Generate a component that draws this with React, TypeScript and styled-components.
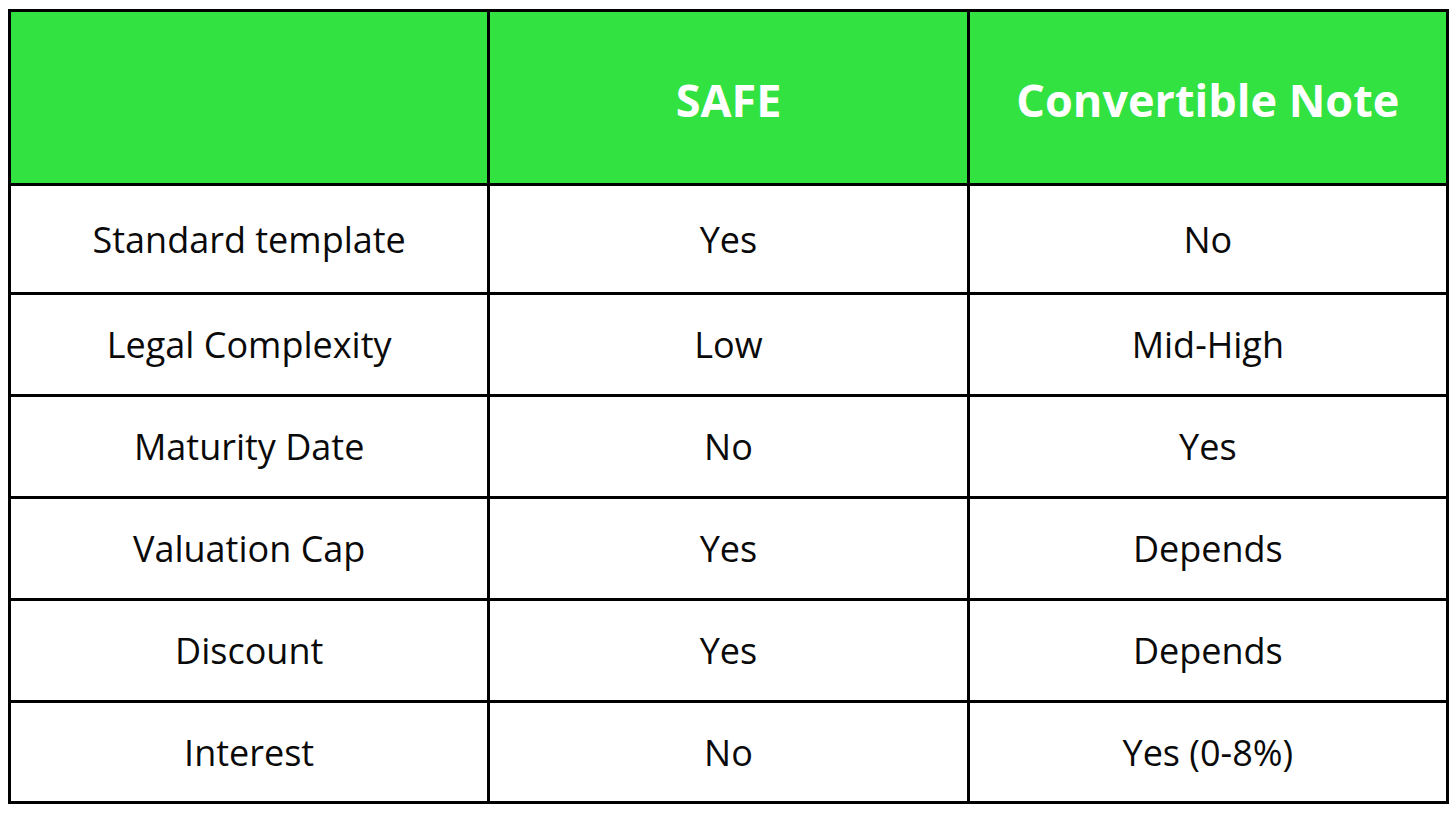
import React from 'react';
import styled, { createGlobalStyle } from 'styled-components';

const colors = {
  green: '#31e241',
  line: '#000000',
  text: '#0a0a0a',
  white: '#ffffff',
};

const rows = [
  ['Standard template', 'Yes', 'No'],
  ['Legal Complexity', 'Low', 'Mid-High'],
  ['Maturity Date', 'No', 'Yes'],
  ['Valuation Cap', 'Yes', 'Depends'],
  ['Discount', 'Yes', 'Depends'],
  ['Interest', 'No', 'Yes (0-8%)'],
];

const GlobalStyle = createGlobalStyle`
  body {
    margin: 0;
    background: ${colors.white};
    font-family: "Open Sans", "Noto Sans", sans-serif;
  }
`;

const Page = styled.div({
  padding: '9px 7px 0 8px',
});

const Table = styled.div({
  background: colors.line,
  display: 'grid',
  gap: 3,
  gridTemplateColumns: 'repeat(3, 1fr)',
  gridTemplateRows: '171px 106px repeat(4, 99px) 98px',
  padding: 3,
  width: 1435,
});

const Cell = styled.div<{ $head?: boolean }>(({ $head }) => ({
  alignItems: 'center',
  background: $head ? colors.green : colors.white,
  color: $head ? colors.white : colors.text,
  display: 'flex',
  fontSize: $head ? 45 : 36,
  fontWeight: $head ? 700 : 400,
  justifyContent: 'center',
  paddingTop: $head ? 3 : 0,
}));

const App = () => (
  <Page>
    <GlobalStyle />
    <Table>
      <Cell $head />
      <Cell $head>SAFE</Cell>
      <Cell $head>Convertible Note</Cell>
      {rows.map(row =>
        row.map((value, i) => (
          <Cell key={`${row[0]}-${i}`}>
            {value}
          </Cell>
        )),
      )}
    </Table>
  </Page>
);

export default App;
